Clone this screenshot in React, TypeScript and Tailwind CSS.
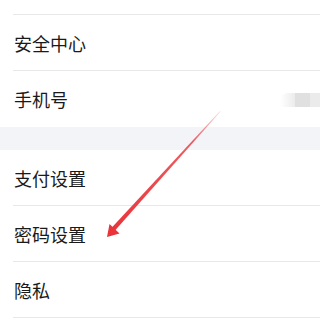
import React from "react";

const Row = ({ label, border = true, right }: { label: string; border?: boolean; right?: React.ReactNode }) => (
  <div className="pl-[13px]">
    <div className={`h-[56px] flex items-center justify-between ${border ? "border-b border-[#e8e8e8]" : ""}`}>
      <span className="text-[18px] leading-none text-[#1a1a1a] pl-[1px]">{label}</span>
      {right}
    </div>
  </div>
);

export default function App() {
  return (
    <div
      className="relative w-[320px] h-[334px] bg-white overflow-hidden"
      style={{ fontFamily: '"Noto Sans CJK SC", "Noto Sans", sans-serif' }}
    >
      <div className="pl-[13px]">
        <div className="h-[15px] border-b border-[#e8e8e8]" />
      </div>
      <Row label="安全中心" />
      <Row
        label="手机号"
        border={false}
        right={
          <div className="flex h-[14px] mt-[2px]">
            <div className="w-[15px] bg-gradient-to-r from-white to-[#ececec] rounded-tl-[8px]" />
            <div className="w-[15px] bg-[#e0e0e0]" />
            <div className="w-[10px] bg-[#ebebeb]" />
          </div>
        }
      />
      <div className="h-[23px] bg-[#f3f4f8]" />
      <Row label="支付设置" />
      <Row label="密码设置" />
      <Row label="隐私" />

      <svg className="absolute left-0 top-0" width="320" height="334" viewBox="0 0 320 334">
        <defs>
          <linearGradient id="g" x1="220" y1="111" x2="110" y2="232" gradientUnits="userSpaceOnUse">
            <stop offset="0" stopColor="#e8343a" stopOpacity="0.15" />
            <stop offset="0.25" stopColor="#e8343a" stopOpacity="0.8" />
            <stop offset="1" stopColor="#e8343a" />
          </linearGradient>
        </defs>
        <polygon points="220,111 220.6,111.6 114.6,231 111.4,228" fill="url(#g)" />
        <polygon points="107,237 109.5,224 119.5,233.5" fill="#e8343a" />
      </svg>
    </div>
  );
}
